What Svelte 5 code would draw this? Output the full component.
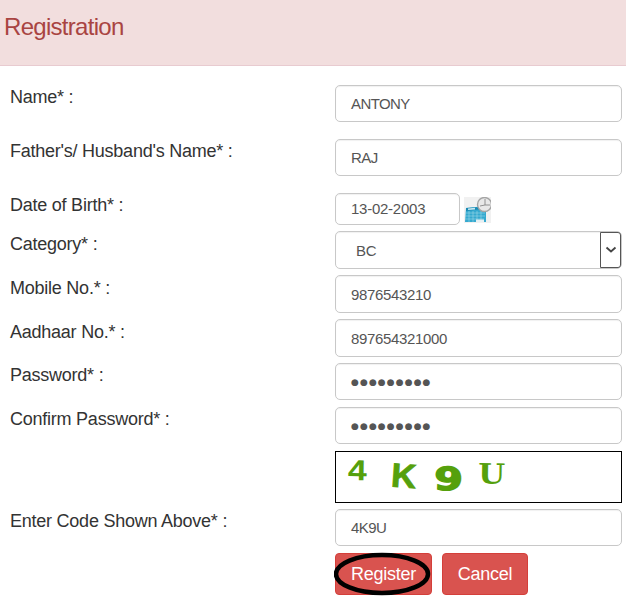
<script>
  const password = '●●●●●●●●●';
  const rows = [
    { label: "Name* :", value: 'ANTONY', height: 54, type: 'caps' },
    { label: "Father's/ Husband's Name* :", value: 'RAJ', height: 54, type: 'caps' },
    { label: 'Date of Birth* :', value: '13-02-2003', height: 38, type: 'date' },
    { label: 'Category* :', value: 'BC', height: 44, type: 'select' },
    { label: 'Mobile No.* :', value: '9876543210', height: 44, type: 'text' },
    { label: 'Aadhaar No.* :', value: '897654321000', height: 44, type: 'text' },
    { label: 'Password* :', value: password, height: 44, type: 'password' },
    { label: 'Confirm Password* :', value: password, height: 44, type: 'password' },
    { label: '', value: '', height: 58, type: 'captcha' },
    { label: 'Enter Code Shown Above* :', value: '4K9U', height: 44, type: 'caps' }
  ];
</script>

<main>
  <header><h1>Registration</h1></header>
  <form>
    {#each rows as row}
      <div class="row" style:height="{row.height}px">
        <div class="label" class:lower={row.type === 'select' || row.type === 'text'}>{row.label}</div>
        {#if row.type === 'captcha'}
          <svg class="captcha" width="287" height="52" viewBox="0 0 287 52">
            <g fill="#55a00c" font-weight="bold">
              <text transform="translate(4 29) rotate(1) scale(1.18 1)" x="3" font-family="Liberation Sans" font-size="30">4</text>
              <text transform="translate(52 36) rotate(4)" font-family="Liberation Sans" font-size="35" textLength="26" lengthAdjust="spacingAndGlyphs" stroke="#55a00c" stroke-width=".9">K</text>
              <text transform="translate(97 39) rotate(2)" font-family="DejaVu Sans" font-size="33" textLength="30" lengthAdjust="spacingAndGlyphs" stroke="#55a00c" stroke-width="1.4">9</text>
              <text transform="translate(143 32.5) rotate(1)" font-family="DejaVu Serif" font-size="29" textLength="28" lengthAdjust="spacingAndGlyphs">U</text>
            </g>
          </svg>
        {:else}
          <div class="control {row.type}">
            <span>{row.value}</span>
            {#if row.type === 'select'}
              <div class="arrow">
                <svg width="12" height="8" viewBox="0 0 12 8"><path d="M1.5 1.5L6 5.5L10.5 1.5" fill="none" stroke="#444" stroke-width="1.8" /></svg>
              </div>
            {/if}
          </div>
        {/if}
        {#if row.type === 'date'}
          <svg class="calendar" width="27" height="26" viewBox="0 0 27 26">
            <rect width="27" height="26" fill="#f1f1f1" />
            <path d="M2 11L22 9V25H1Z" fill="#35a9cf" />
            <path d="M2 11L18 10V12L2 14Z" fill="#1889b3" />
            <path d="M4 11.4L11 10.8V12.4L4 13Z" fill="#c8e7ef" />
            <path d="M1 16H21M1 19H21M1 22H20M5 14V25M9 14V25M13 14V25M17 14V25" stroke="#a9dce9" stroke-width=".5" />
            <path d="M12 22.5H20V25H12Z" fill="#e6f0f3" />
            <circle cx="20.5" cy="7.5" r="7" fill="#e8e8e8" stroke="#a5a5a5" stroke-width="1.4" />
            <path d="M21 2V8H26M21 8L16 9" fill="none" stroke="#888" stroke-width=".9" />
          </svg>
        {/if}
      </div>
    {/each}
    <div class="actions">
      <button type="button" class="register">Register
        <svg class="ring" width="98" height="44" viewBox="0 0 98 44"><ellipse cx="48" cy="22" rx="46" ry="19" fill="none" stroke="#000" stroke-width="4.5" /></svg>
      </button>
      <button type="button" class="cancel">Cancel</button>
    </div>
  </form>
</main>

<style>
  main {
    width: 626px;
    height: 597px;
    overflow: hidden;
    background: #fff;
    font-family: 'Liberation Sans', Arial, sans-serif;
  }
  header {
    height: 66px;
    box-sizing: border-box;
    padding: 12px 0 0 4px;
    background: #f2dede;
    border-bottom: 1px solid #e8cbd0;
  }
  h1 {
    margin: 0;
    color: #a94442;
    font-size: 24px;
    font-weight: 400;
    line-height: 29px;
    letter-spacing: -0.7px;
  }
  form { padding: 19px 4px 0 10px; }
  .row { display: flex; align-items: flex-start; }
  .label {
    width: 325px;
    flex: none;
    color: #333;
    font-size: 18px;
    line-height: 24px;
    letter-spacing: -0.24px;
  }
  .label.lower { padding-top: 1px; }
  .control {
    display: flex;
    align-items: center;
    box-sizing: border-box;
    width: 287px;
    height: 37px;
    padding-left: 15px;
    border: 1px solid #c8c8c8;
    border-radius: 5px;
    color: #555;
    font-size: 15px;
    letter-spacing: -0.35px;
    box-shadow: inset 0 1px 1px #0000000f;
  }
  .control.caps { letter-spacing: -0.6px; }
  .control.date { width: 125px; height: 32px; padding-bottom: 2px; letter-spacing: -0.25px; }
  .control.select { height: 38px; padding-left: 20px; justify-content: space-between; }
  .control.text { height: 38px; }
  .control.password { font-family: 'DejaVu Sans', sans-serif; font-size: 9px; letter-spacing: 1.1px; padding-top: 1px; }
  .arrow {
    display: flex;
    align-items: center;
    justify-content: center;
    box-sizing: border-box;
    width: 21px;
    height: 36px;
    border: 1px solid #555;
    border-radius: 0 3px 3px 0;
  }
  .calendar { margin: 4px 0 0 4px; }
  .captcha { box-sizing: border-box; border: 1px solid #000; }
  .actions { display: flex; gap: 10px; padding-left: 325px; }
  button {
    position: relative;
    width: 97px;
    height: 42px;
    padding: 0;
    border: 1px solid #d43f3a;
    border-radius: 4px;
    background: #d9534f;
    color: #fff;
    font: 18px 'Liberation Sans', Arial, sans-serif;
    letter-spacing: -0.25px;
  }
  .cancel { width: 86px; }
  .ring { position: absolute; left: -2px; top: -2px; }
</style>
